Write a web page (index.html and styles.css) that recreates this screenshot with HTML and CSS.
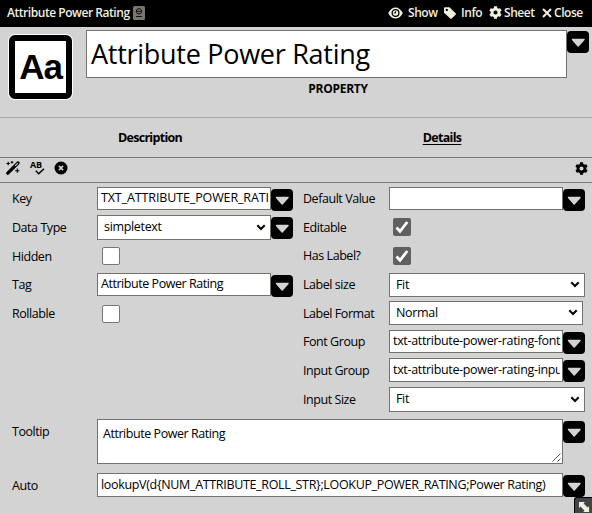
FILE: index.html
```
<!DOCTYPE html>
<html lang="en">
<head>
<meta charset="utf-8">
<title>Attribute Power Rating</title>
<link rel="stylesheet" href="styles.css">
</head>
<body>
<svg class="defs" width="0" height="0">
  <symbol id="gear" viewBox="0 0 512 512"><path fill-rule="evenodd" d="M487.4 315.7l-42.600-24.600c4.300-23.200 4.300-47 0-70.200l42.600-24.600c4.900-2.800 7.100-8.600 5.500-14-11.100-35.600-30-67.800-54.700-94.600-3.800-4.100-10-5.100-14.800-2.300L380.800 110c-17.900-15.400-38.500-27.300-60.800-35.100V25.800c0-5.600-3.900-10.500-9.400-11.700-36.700-8.200-74.300-7.800-109.200 0-5.500 1.200-9.400 6.100-9.400 11.700V75c-22.200 7.900-42.800 19.800-60.800 35.100L88.700 85.500c-4.900-2.800-11-1.900-14.800 2.300-24.700 26.700-43.600 58.900-54.700 94.600-1.700 5.400.6 11.200 5.500 14L67.300 221c-4.300 23.200-4.300 47 0 70.200l-42.600 24.600c-4.900 2.800-7.100 8.600-5.500 14 11.100 35.600 30 67.800 54.700 94.600 3.800 4.100 10 5.100 14.800 2.300l42.600-24.600c17.900 15.400 38.500 27.300 60.800 35.100v49.200c0 5.600 3.900 10.500 9.400 11.700 36.700 8.200 74.300 7.800 109.200 0 5.500-1.200 9.400-6.100 9.400-11.700v-49.200c22.200-7.900 42.800-19.800 60.800-35.100l42.600 24.600c4.900 2.800 11 1.900 14.800-2.300 24.700-26.700 43.600-58.900 54.700-94.600 1.500-5.500-.7-11.300-5.600-14.100zM256 336c-44.100 0-80-35.900-80-80s35.900-80 80-80 80 35.900 80 80-35.900 80-80 80z"/></symbol>
  <symbol id="drop" viewBox="0 0 22 22"><path d="M5.500 8.500h11.500L11.200 15z" fill="#d3d3d3" stroke="#d3d3d3" stroke-width="1.500" stroke-linejoin="round"/></symbol>
  <symbol id="chev" viewBox="0 0 10 7"><path d="M1.300 1.300L5 5l3.700-3.700" fill="none" stroke="#000" stroke-width="2"/></symbol>
  <symbol id="tick" viewBox="0 0 18 18"><path d="M3.500 9.500L7 13.300 14.300 4" fill="none" stroke="#fff" stroke-width="2.800"/></symbol>
</svg>

<header class="bar">
  <span class="bar-title">Attribute Power Rating</span>
  <svg class="passport" viewBox="0 0 12 14"><rect width="12" height="14" rx="1.500" fill="#77776f"/><circle cx="6" cy="5.300" r="2.700" fill="none" stroke="#111"/><path d="M3.300 5.300h5.400M3 10.500h6" stroke="#111"/></svg>
  <nav class="actions">
    <a class="act show"><svg width="15" height="12" viewBox="0 0 15 12"><path d="M.2 6C2 2.300 4.700.4 7.500.4S13 2.300 14.800 6C13 9.700 10.300 11.600 7.500 11.600S2 9.700.2 6z" fill="#f0f0e0"/><circle cx="7.500" cy="6" r="3.400" fill="none" stroke="#000" stroke-width="1.300"/><path d="M7.500 4.300v1.700H5.700" fill="none" stroke="#000"/></svg>Show</a>
    <a class="act info"><svg width="12" height="12" viewBox="0 0 12 12"><path fill-rule="evenodd" fill="#f0f0e0" d="M0 1.200Q0 .2 1 .2h4.500l6.100 6.100q.7.700 0 1.400l-3.900 3.900q-.7.700-1.400 0L0 5.700zM2.800 1.800a1.100 1.100 0 1 0 .01 0z"/></svg>Info</a>
    <a class="act sheet"><svg width="13" height="13" fill="#f0f0e0"><use href="#gear"/></svg>Sheet</a>
    <a class="act close"><svg width="10" height="10" viewBox="0 0 10 10"><path d="M1 1l8 8M9 1L1 9" stroke="#f0f0e0" stroke-width="2"/></svg>Close</a>
  </nav>
</header>

<section class="head">
  <div class="avatar"><span>Aa</span></div>
  <div class="namebox">
    <div class="name">Attribute Power Rating</div>
    <div class="kind">PROPERTY</div>
  </div>
  <button class="btn"><svg><use href="#drop"/></svg></button>
</section>

<nav class="tabs"><a>Description</a><a class="active">Details</a></nav>

<div class="tools">
  <svg width="14" height="14" viewBox="0 0 14 14"><path d="M1.800 12.200L12 2" stroke="#000" stroke-width="3.200" stroke-linecap="round"/><path d="M9.200 4.800l2.600-2.600" stroke="#d3d3d3" stroke-width="1.100"/><path d="M2.200.8v3.400M.5 2.500h3.400M6 0v2.600M4.700 1.300h2.600M11.300 7.600v4.200M9.200 9.700h4.200" stroke="#000" stroke-width="1.100"/></svg>
  <div class="spell"><span>AB</span><svg width="10" height="7" viewBox="0 0 10 7"><path d="M.8 2.800L3.700 5.700 9 .7" fill="none" stroke="#000" stroke-width="1.500"/></svg></div>
  <svg width="14" height="14" viewBox="0 0 14 14"><circle cx="7" cy="7" r="6.500"/><path d="M4.900 4.900l4.200 4.200M9.100 4.900L4.900 9.100" stroke="#d3d3d3" stroke-width="1.500"/></svg>
  <svg class="cog" width="13" height="13"><use href="#gear"/></svg>
</div>

<main class="form">
  <div class="cols">
    <div class="col left">
      <div class="row r28"><label>Key</label><div class="field key h23">TXT_ATTRIBUTE_POWER_RATI</div><button class="btn"><svg><use href="#drop"/></svg></button></div>
      <div class="row r29 low"><label>Data Type</label><div class="field select h25"><span>simpletext</span><svg><use href="#chev"/></svg></div><button class="btn"><svg><use href="#drop"/></svg></button></div>
      <div class="row r29 low"><label>Hidden</label><i class="check"></i></div>
      <div class="row r29"><label>Tag</label><div class="field tag h23">Attribute Power Rating</div><button class="btn"><svg><use href="#drop"/></svg></button></div>
      <div class="row r29"><label>Rollable</label><i class="check"></i></div>
    </div>
    <div class="col right">
      <div class="row r28"><label>Default Value</label><div class="field h23"></div><button class="btn"><svg><use href="#drop"/></svg></button></div>
      <div class="row r29 low"><label>Editable</label><i class="check on"><svg><use href="#tick"/></svg></i></div>
      <div class="row r29"><label>Has Label?</label><i class="check on"><svg><use href="#tick"/></svg></i></div>
      <div class="row r28"><label>Label size</label><div class="field select wide h24"><span>Fit</span><svg><use href="#chev"/></svg></div></div>
      <div class="row r29 low"><label>Label Format</label><div class="field select mid h24"><span>Normal</span><svg><use href="#chev"/></svg></div></div>
      <div class="row r28"><label>Font Group</label><div class="field h23">txt-attribute-power-rating-font</div><button class="btn"><svg><use href="#drop"/></svg></button></div>
      <div class="row r29 low"><label>Input Group</label><div class="field h24"><div class="clip">txt-attribute-power-rating-input</div></div><button class="btn"><svg><use href="#drop"/></svg></button></div>
      <div class="row r29 low"><label>Input Size</label><div class="field select wide h25"><span>Fit</span><svg><use href="#chev"/></svg></div></div>
    </div>
  </div>
  <div class="row tip"><label>Tooltip</label><div class="field area">Attribute Power Rating<svg class="grip" viewBox="0 0 9 9"><path d="M.5 8.500l8-8M5.500 8.500l3-3" stroke="#555" stroke-width="1"/></svg></div><button class="btn"><svg><use href="#drop"/></svg></button></div>
  <div class="row auto"><label>Auto</label><div class="field h24">lookupV(d{NUM_ATTRIBUTE_ROLL_STR};LOOKUP_POWER_RATING;Power Rating)</div><button class="btn"><svg><use href="#drop"/></svg></button></div>
</main>
<div class="resize"><svg width="11" height="11" viewBox="0 0 12 12"><path d="M0 0h6.500L5 1.600 9.400 6 11 4.500V11H4.500L6 9.400 1.600 5 0 6.500z" fill="#f0f0e0"/></svg></div>
</body>
</html>
```
FILE: styles.css
```
* { box-sizing: border-box; }
html, body { height: 100%; }
body {
  margin: 0;
  overflow: hidden;
  background: #d3d3d3;
  color: #000;
  font: 400 12.500px/18px "Open Sans", sans-serif;
  letter-spacing: -.33px;
  white-space: nowrap;
}
svg { display: block; flex: none; }
.defs { position: absolute; }

.bar {
  display: flex;
  align-items: center;
  height: 27px;
  padding: 0 7px 2px;
  background: #000;
  color: #f0f0e0;
  font-size: 12px;
  font-weight: 600;
  letter-spacing: -.45px;
}
.bar-title { width: 126px; }
.passport { width: 12px; height: 14px; }
.actions { display: flex; margin-left: auto; }
.act { display: flex; align-items: center; }
.show { width: 56px; gap: 5px; }
.info { width: 45px; gap: 5px; }
.sheet { width: 53px; gap: 2px; }
.close { width: 43px; gap: 2px; }

.head { display: flex; height: 90px; }
.avatar {
  width: 65px;
  height: 66px;
  margin: 7px 13px 0 8px;
  padding: 1px;
  border-radius: 7px;
  background: #fff;
}
.avatar span {
  display: block;
  height: 64px;
  border: 6px solid #000;
  border-radius: 6px;
  font: 700 35px/52px "Liberation Sans", sans-serif;
  text-align: center;
  letter-spacing: -1px;
}
.namebox { width: 481px; padding-top: 3px; }
.name {
  height: 48px;
  padding: 0 4px;
  border: 1px solid #73736b;
  background: #fff;
  font-size: 27px;
  letter-spacing: -.28px;
  line-height: 46px;
}
.kind { padding: 2px 0 0 23px; text-align: center; font-weight: 700; font-size: 12px; letter-spacing: -.25px; }
.head .btn { margin-top: 4px; }

.btn {
  width: 22px;
  height: 22px;
  padding: 0;
  border: 0;
  border-radius: 4px;
  background: #000;
  flex: none;
}
.btn svg { width: 22px; height: 22px; }

.tabs {
  display: grid;
  grid-template-columns: 1fr 1fr;
  height: 41px;
  padding: 0 4px;
  border-top: 1px solid #a5a5a5;
  border-bottom: 1px solid #777;
  font-weight: 700;
  letter-spacing: -.7px;
  line-height: 39px;
  text-align: center;
}
.active { text-decoration: underline; text-underline-offset: 2px; }

.tools {
  display: flex;
  align-items: center;
  height: 25px;
  padding: 0 4px 4px 6px;
  border-bottom: 1px solid #777;
}
.spell { width: 15px; height: 14px; margin: 0 9px 0 10px; }
.spell span { display: block; height: 7px; font: 700 9px/7px "Open Sans", sans-serif; letter-spacing: -.2px; }
.spell svg { margin-left: 5px; }
.cog { margin-left: auto; }

.form { padding: 4px 0 0 12px; }
.cols { display: flex; height: 232px; }
.col { width: 291px; }
.right { width: 289px; }
.row { display: flex; align-items: flex-start; }
.r28 { height: 28px; }
.r29 { height: 29px; }
label { width: 85px; line-height: 23px; letter-spacing: -.45px; flex: none; }
.low label { line-height: 25px; }
.right label { width: 86px; }
.field {
  width: 174px;
  padding: 0 2px 0 3px;
  border: 1px solid #73736b;
  background: #fff;
  line-height: 20px;
  overflow: hidden;
  flex: none;
}
.clip { width: 167px; overflow: hidden; }
.key { letter-spacing: -.12px; }
.tag, .area { letter-spacing: -.45px; }
.h23 { height: 23px; }
.h24 { height: 24px; line-height: 21px; }
.h25 { height: 25px; }
.field + .btn { margin-top: 2px; }
.left .btn { margin-left: .4px; }
.select { display: flex; justify-content: space-between; align-items: center; padding: 0 4px 1px 6px; }
.select svg { width: 10px; height: 7px; }
.wide { width: 196px; }
.mid { width: 194px; }
.check {
  width: 18px;
  height: 18px;
  margin: 3px 0 0 5px;
  border: 1px solid #767676;
  border-radius: 2px;
  background: #fff;
}
.on { border: 0; margin-left: 4px; background: #606060; }
.on svg { width: 18px; height: 18px; }

.tip { height: 54px; }
.tip .field, .auto .field { width: 466px; }
.tip label { line-height: 26px; }
.area { position: relative; height: 45px; padding: 4px 5px; }
.grip { position: absolute; right: 1px; bottom: 1px; width: 9px; height: 9px; }
.auto label { line-height: 25px; }

.resize {
  position: absolute;
  right: 0;
  bottom: 0;
  width: 18px;
  height: 16px;
  padding: 4px 0 0 4px;
  border: 1px solid #000;
  border-width: 1px 0 0 1px;
  border-radius: 3px 0 0 0;
  background: #444;
}
```
